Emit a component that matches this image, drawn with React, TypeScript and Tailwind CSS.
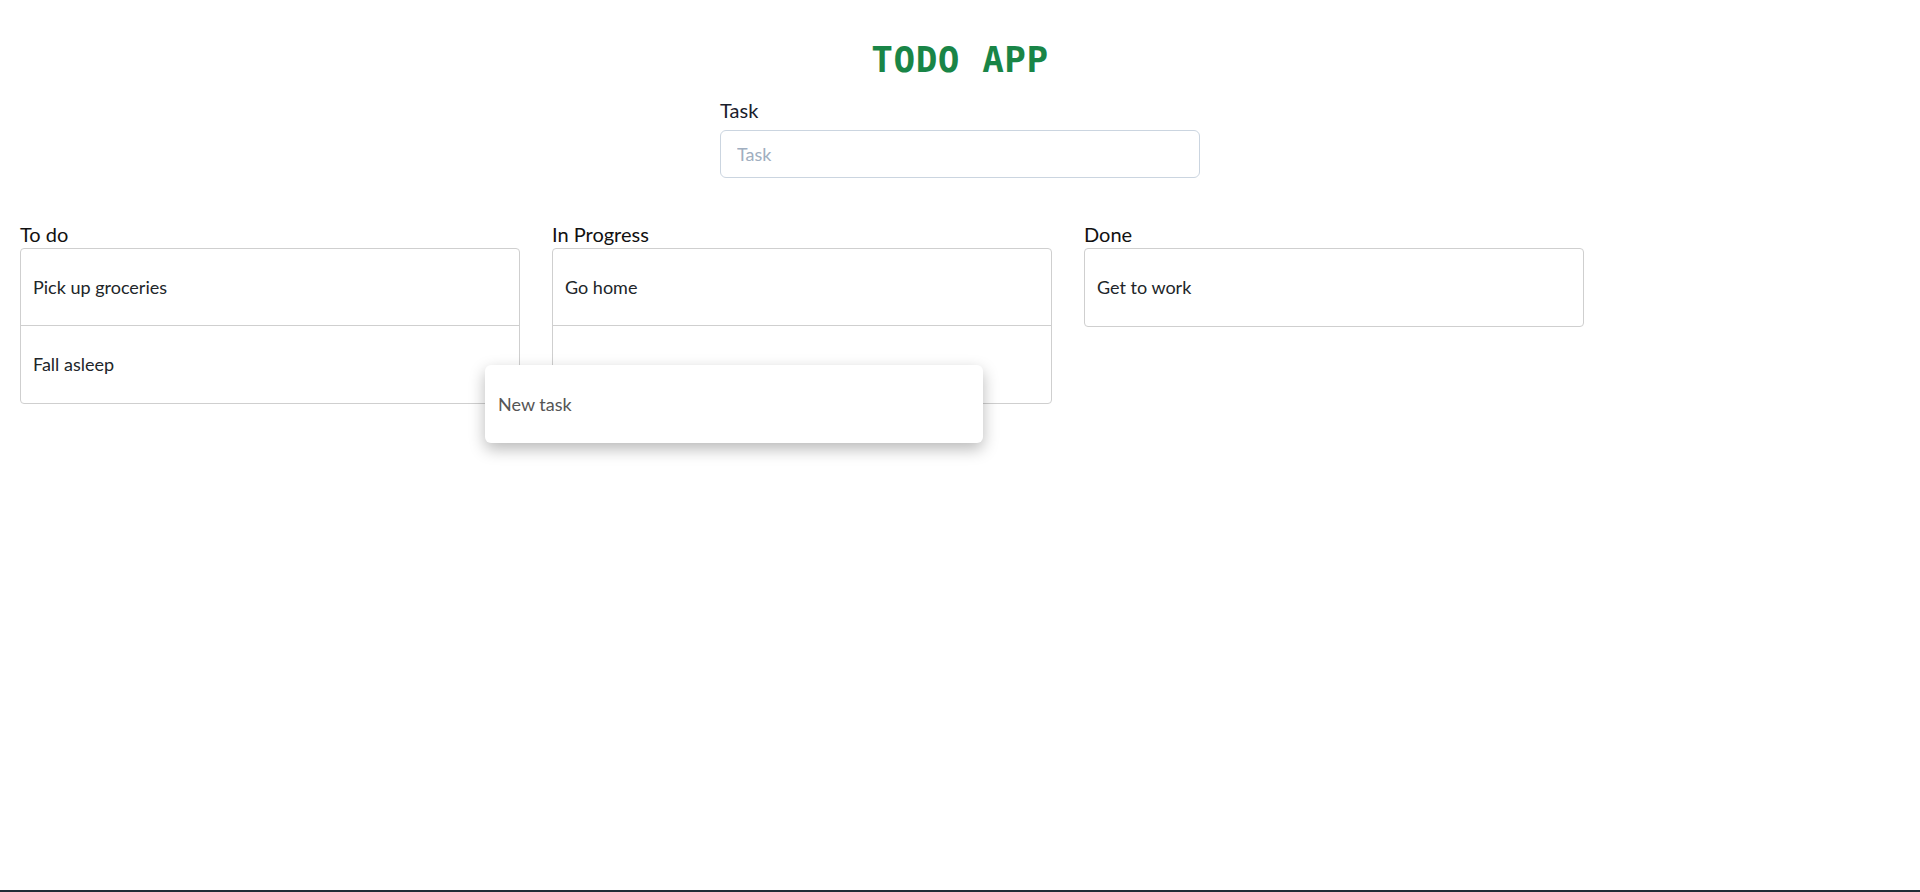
import { useState } from "react";

type Column = {
  title: string;
  items: string[];
};

const columns: Column[] = [
  { title: "To do", items: ["Pick up groceries", "Fall asleep"] },
  { title: "In Progress", items: ["Go home", ""] },
  { title: "Done", items: ["Get to work"] },
];

const TaskRow = ({ text, last }: { text: string; last: boolean }) => (
  <div
    className={`flex items-center h-[77px] px-3 text-[18px] text-[#212529] ${
      last ? "" : "border-b border-[#cfcfcf]"
    }`}
  >
    {text}
  </div>
);

export default function App() {
  const [task, setTask] = useState("");

  return (
    <div
      className="h-[892px] flex flex-col bg-white"
      style={{ fontFamily: "Lato, 'Open Sans', sans-serif" }}
    >
      <div className="flex-1">
        <h1
          className="pt-[39px] text-center text-[36px] leading-[42px] font-bold tracking-[0.5px] text-[#198547]"
          style={{ fontFamily: "'DejaVu Sans Mono', monospace" }}
        >
          TODO APP
        </h1>

        <div className="w-[480px] mx-auto mt-[17px]">
          <label className="block text-[20px] leading-[24px] text-[#1a202c] mb-[8px]">
            Task
          </label>
          <input
            value={task}
            onChange={(e) => setTask(e.target.value)}
            placeholder="Task"
            className="w-full h-[48px] px-4 text-[18px] text-[#1a202c] border border-[#cbd5e0] rounded-md outline-none placeholder:text-[#a0aec0]"
          />
        </div>

        <div className="relative flex gap-8 pl-5 mt-[43px]">
          {columns.map((col) => (
            <div key={col.title} className="w-[500px]">
              <div className="text-[20px] leading-[27px] text-[#111]">
                {col.title}
              </div>
              <div className="border border-[#cfcfcf] rounded">
                {col.items.map((item, i) => (
                  <TaskRow
                    key={i}
                    text={item}
                    last={i === col.items.length - 1}
                  />
                ))}
              </div>
            </div>
          ))}

          {/* item being dragged */}
          <div className="absolute left-[485px] top-[144px] w-[498px] h-[78px] flex items-center px-[13px] bg-white rounded-md text-[18px] text-[#555] shadow-[0_6px_16px_rgba(0,0,0,0.28)]">
            New task
          </div>
        </div>
      </div>
      <div className="h-[2px] bg-[#222c36]" />
    </div>
  );
}
